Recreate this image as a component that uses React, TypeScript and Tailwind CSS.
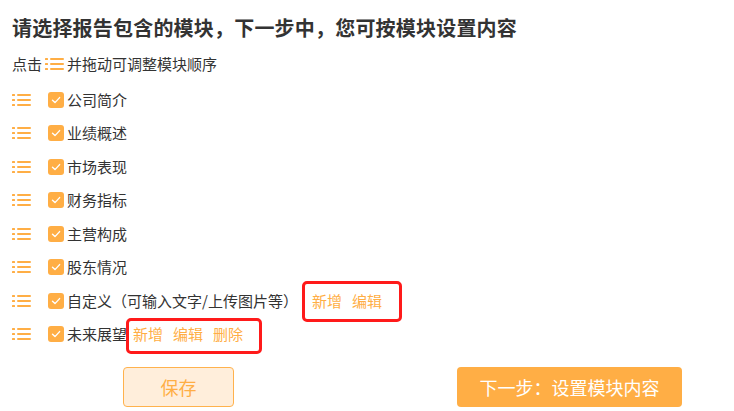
import React from "react"

const orange = "#FFAE45"

function DragIcon({ className = "" }: { className?: string }) {
  return (
    <svg className={className} width="19" height="12" viewBox="0 0 19 12" fill="none">
      <g fill="#FFAE45">
        <rect x="0" y="0" width="3" height="2" rx="0.5" />
        <rect x="5" y="0" width="14" height="2" rx="1" />
        <rect x="0" y="5" width="3" height="2" rx="0.5" />
        <rect x="5" y="5" width="14" height="2" rx="1" />
        <rect x="0" y="10" width="3" height="2" rx="0.5" />
        <rect x="5" y="10" width="14" height="2" rx="1" />
      </g>
    </svg>
  )
}

function Checkbox() {
  return (
    <span className="flex h-4 w-4 shrink-0 items-center justify-center rounded-[3px] bg-[#FFAE45]">
      <svg width="10" height="10" viewBox="0 0 10 10" fill="none">
        <path d="M1.5 5.2L4 7.6L8.6 2.6" stroke="white" strokeWidth="1.4" strokeLinecap="round" strokeLinejoin="round" />
      </svg>
    </span>
  )
}

type Row = { label: string; links?: string[]; box?: "a" | "b" }

const rows: Row[] = [
  { label: "公司简介" },
  { label: "业绩概述" },
  { label: "市场表现" },
  { label: "财务指标" },
  { label: "主营构成" },
  { label: "股东情况" },
  { label: "自定义（可输入文字/上传图片等）", links: ["新增", "编辑"], box: "a" },
  { label: "未来展望", links: ["新增", "编辑", "删除"], box: "b" },
]

export default function App() {
  return (
    <div className="h-[411px] w-[734px] overflow-hidden bg-white px-3 pt-[14px] font-['Noto_Sans_CJK_SC','Noto_Sans',sans-serif] text-[#333]">
      {/* 标题 */}
      <h1 className="text-[20px] font-bold leading-7 tracking-[0.2px] text-[#333]">请选择报告包含的模块，下一步中，您可按模块设置内容</h1>
      <p className="mt-3 flex items-center text-[15px] leading-5">
        点击
        <DragIcon className="mx-[3px]" />
        并拖动可调整模块顺序
      </p>

      {/* 模块列表 */}
      <div className="mt-[9px]">
        {rows.map((r) => (
          <div key={r.label} className="flex h-[33.5px] items-center text-[15px]">
            <DragIcon className="shrink-0" />
            <span className="ml-[17px]">
              <Checkbox />
            </span>
            <span className="ml-[3px] whitespace-nowrap leading-5">{r.label}</span>
            {r.links && (
              <span className={`relative flex h-full items-center gap-[10px] ${r.box === "a" ? "ml-[14px]" : "ml-[6px]"}`}>
                {r.links.map((l) => (
                  <span key={l} className="leading-5 text-[#FFAE45]">
                    {l}
                  </span>
                ))}
                {r.box === "a" && (
                  <span className="pointer-events-none absolute -bottom-[4px] -left-[10px] -right-[20px] -top-[3px] rounded-[5px] border-[3px] border-[#FF1A1A]" />
                )}
                {r.box === "b" && (
                  <span className="pointer-events-none absolute -bottom-[3px] -left-[7px] -right-[19px] top-0 rounded-[5px] border-[3px] border-[#FF1A1A]" />
                )}
              </span>
            )}
          </div>
        ))}
      </div>

      {/* 按钮 */}
      <div className="mt-[16px] flex pl-[111px]">
        <button className="flex h-10 w-[111px] items-center justify-center rounded-[4px] border border-[#FFB24D] bg-[#FFEEDB] text-[18px] text-[#FFAE45]">
          保存
        </button>
        <button
          className="ml-[223px] flex h-10 w-[225px] items-center justify-center rounded-[4px] text-[18px] text-white"
          style={{ backgroundColor: orange }}
        >
          下一步：设置模块内容
        </button>
      </div>
    </div>
  )
}
